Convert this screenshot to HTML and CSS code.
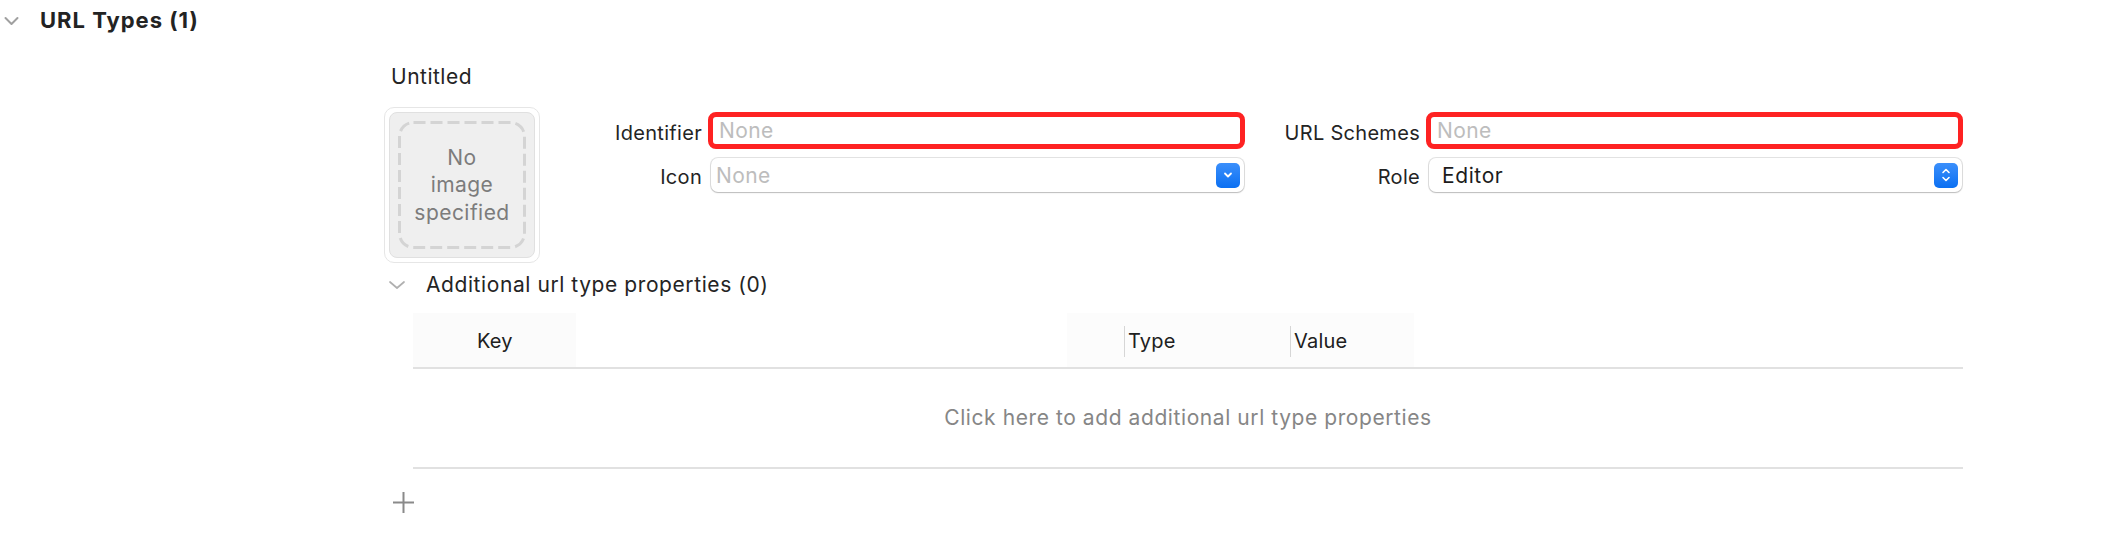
FILE: index.html
```html
<!DOCTYPE html>
<html>
<head>
<meta charset="utf-8">
<link rel="stylesheet" href="styles.css">
</head>
<body>
<div class="page">
  <div class="section-head">
    <svg class="chev" width="15" height="10" viewBox="0 0 15 10"><path d="M1.5 2 L7.5 8 L13.5 2" fill="none" stroke="#a0a0a0" stroke-width="2" stroke-linecap="round" stroke-linejoin="round"/></svg>
    <span class="section-title">URL Types (1)</span>
  </div>

  <div class="item">
    <div class="item-title">Untitled</div>

    <div class="item-body">
      <div class="image-well">
        <div class="image-inner">
          <svg class="dash" width="128" height="128" viewBox="0 0 128 128"><rect x="1.5" y="1.5" width="125" height="125" rx="14" ry="14" fill="none" stroke="#d4d4d4" stroke-width="3" stroke-dasharray="12 5"/></svg>
          <div class="image-text">No<br>image<br>specified</div>
        </div>
      </div>

      <div class="fields">
        <div class="label">Identifier</div>
        <div class="textfield marked"><span class="placeholder">None</span></div>
        <div class="label">URL Schemes</div>
        <div class="textfield marked"><span class="placeholder">None</span></div>

        <div class="label">Icon</div>
        <div class="popup combo">
          <span class="placeholder">None</span>
          <span class="blue-btn">
            <svg width="10" height="7" viewBox="0 0 10 7"><path d="M2 1.5 L5 4.5 L8 1.5" fill="none" stroke="#fff" stroke-width="1.8" stroke-linecap="round" stroke-linejoin="round"/></svg>
          </span>
        </div>
        <div class="label">Role</div>
        <div class="popup role">
          <span class="value">Editor</span>
          <span class="blue-btn">
            <svg width="10" height="16" viewBox="0 0 10 16"><path d="M2 5.5 L5 2.5 L8 5.5 M2 10.5 L5 13.5 L8 10.5" fill="none" stroke="#fff" stroke-width="1.6" stroke-linecap="round" stroke-linejoin="round"/></svg>
          </span>
        </div>
      </div>
    </div>

    <div class="sub-head">
      <svg class="chev" width="16" height="8" viewBox="0 0 16 8"><path d="M1 1 L8 7 L15 1" fill="none" stroke="#b0b0b0" stroke-width="1.7" stroke-linecap="round" stroke-linejoin="round"/></svg>
      <span class="sub-title">Additional url type properties (0)</span>
    </div>

    <div class="table">
      <div class="thead">
        <div class="th key">Key</div>
        <div class="th col">Type</div>
        <div class="th col">Value</div>
      </div>
      <div class="tbody">Click here to add additional url type properties</div>
    </div>

    <div class="add">
      <svg width="21" height="21" viewBox="0 0 21 21"><path d="M10.5 0 V21 M0 10.5 H21" stroke="#8a8a8a" stroke-width="2"/></svg>
    </div>
  </div>
</div>
</body>
</html>
```
FILE: styles.css
```css
html, body {
  margin: 0;
  padding: 0;
  background: #ffffff;
}
body {
  width: 2126px;
  height: 540px;
  overflow: hidden;
  font-family: Inter, "Noto Sans", "Liberation Sans", sans-serif;
  color: #242424;
}
.page {
  display: flex;
  flex-direction: column;
}
.section-head {
  display: flex;
  align-items: center;
  height: 41px;
  padding-left: 4px;
}
.section-head .chev {
  flex: none;
}
.section-title {
  margin-left: 21px;
  font-size: 22px;
  font-weight: 700;
  letter-spacing: 1px;
  line-height: 41px;
  color: #232323;
}
.item {
  margin-left: 384px;
  display: flex;
  flex-direction: column;
}
.item-title {
  margin-top: 24px;
  padding-left: 7px;
  font-size: 21px;
  letter-spacing: 0.5px;
  line-height: 24px;
}
.item-body {
  display: flex;
  margin-top: 18px;
}
.image-well {
  flex: none;
  width: 156px;
  height: 156px;
  box-sizing: border-box;
  border: 1px solid #e6e6e6;
  border-radius: 10px;
  padding: 4px;
  background: #fff;
}
.image-inner {
  width: 100%;
  height: 100%;
  box-sizing: border-box;
  background: #efefef;
  border: 1px solid #e0e0e0;
  border-radius: 8px;
  display: grid;
  place-items: center;
}
.image-inner > * {
  grid-area: 1 / 1;
}
.image-text {
  text-align: center;
  font-size: 21px;
  letter-spacing: 0.45px;
  line-height: 27.5px;
  color: #7c7c7c;
}
.fields {
  margin-top: 5px;
  display: grid;
  grid-template-columns: 162px 537px 169px 537px;
  grid-template-rows: 37px 34px;
  column-gap: 6px;
  row-gap: 9px;
  align-items: center;
}
.label {
  text-align: right;
  font-size: 20px;
  letter-spacing: 0.3px;
  line-height: 24px;
  padding-top: 4px;
  color: #242424;
}
.textfield {
  height: 37px;
  box-sizing: border-box;
  border-radius: 8px;
  display: flex;
  align-items: center;
  font-size: 21px;
}
.textfield.marked {
  border: 5px solid #fe2222;
  padding-left: 6px;
}
.placeholder {
  color: #bdbdbd;
  letter-spacing: 0.4px;
}
.popup {
  height: 34px;
  box-sizing: border-box;
  margin-left: 3px;
  margin-right: 1px;
  border-radius: 7px;
  background: #fff;
  box-shadow: 0 0 0 1px rgba(0, 0, 0, 0.11), 0 1px 1.5px rgba(0, 0, 0, 0.18);
  display: flex;
  align-items: center;
  justify-content: space-between;
  padding-right: 4px;
  font-size: 21px;
}
.popup.combo {
  padding-left: 5px;
}
.popup.role {
  padding-left: 13px;
}
.popup .value {
  color: #1c1c1c;
  letter-spacing: 0.6px;
}
.blue-btn {
  width: 24px;
  height: 25px;
  border-radius: 5px;
  background: linear-gradient(#3b8ffb, #0b70f2);
  display: flex;
  align-items: center;
  justify-content: center;
}
.sub-head {
  display: flex;
  align-items: center;
  height: 30px;
  margin-top: 7px;
  padding-left: 5px;
}
.sub-title {
  margin-left: 21px;
  font-size: 21px;
  letter-spacing: 0.58px;
  line-height: 30px;
  color: #242424;
}
.table {
  margin-top: 13px;
  margin-left: 29px;
  width: 1550px;
}
.thead {
  display: grid;
  grid-template-columns: 711px 166px 1fr;
  height: 56px;
  box-sizing: border-box;
  border-bottom: 2px solid #e1e1e1;
  background: linear-gradient(to right, #fbfbfb 0, #fbfbfb 163px, #ffffff 163px, #ffffff 654px, #fcfcfc 654px, #fcfcfc 1001px, #ffffff 1001px);
}
.th {
  margin-top: 13px;
  height: 31px;
  line-height: 31px;
  font-size: 20px;
  letter-spacing: 0.2px;
  color: #202020;
}
.th.key {
  padding-left: 64px;
}
.th.col {
  border-left: 1px solid #d6d6d6;
  padding-left: 3px;
}
.tbody {
  height: 100px;
  box-sizing: border-box;
  border-bottom: 2px solid #e1e1e1;
  display: flex;
  align-items: center;
  justify-content: center;
  font-size: 21px;
  letter-spacing: 0.58px;
  line-height: 24px;
  color: #868686;
}
.add {
  margin-top: 23px;
  margin-left: 9px;
  width: 21px;
  height: 21px;
}
.add svg {
  display: block;
}
```
